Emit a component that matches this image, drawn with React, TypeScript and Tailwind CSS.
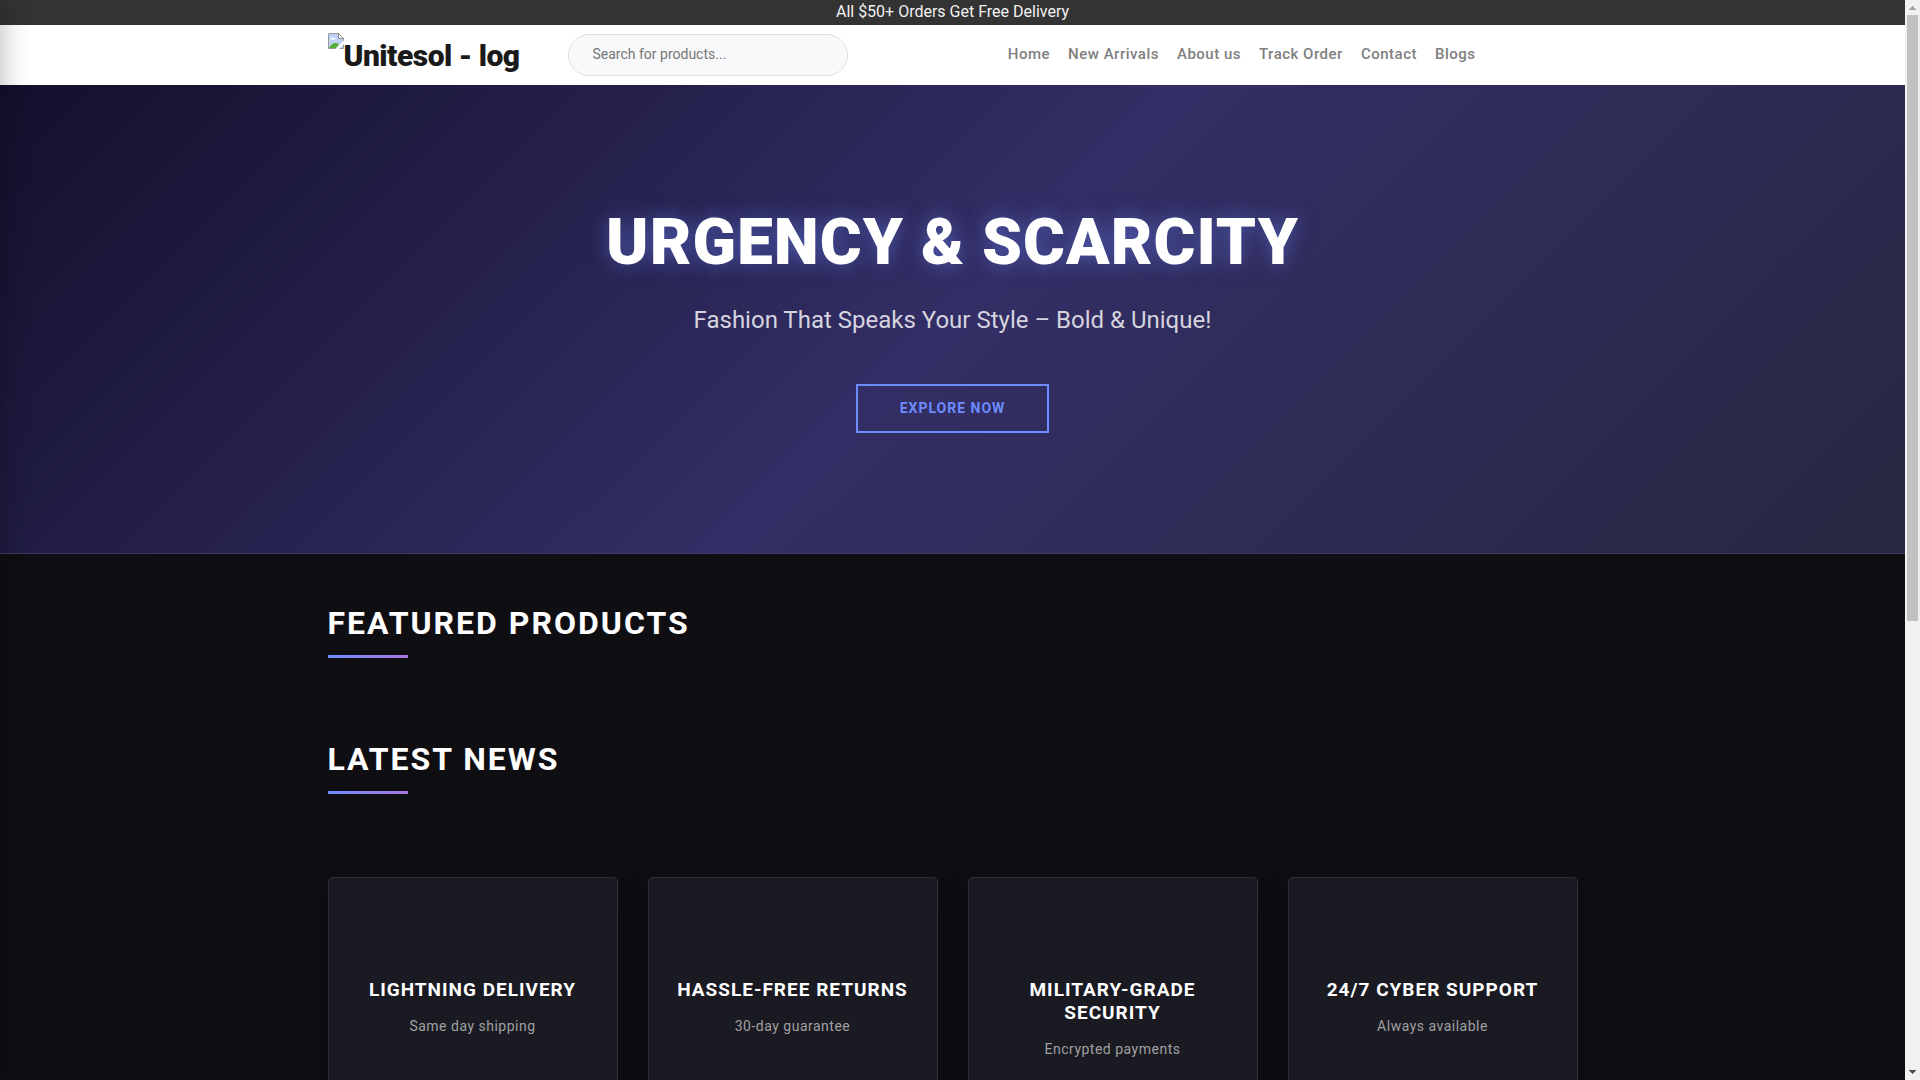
const navLinks = ['Home', 'New Arrivals', 'About us', 'Track Order', 'Contact', 'Blogs'];

const features = [
  { title: 'Lightning Delivery', text: 'Same day shipping' },
  { title: 'Hassle-Free Returns', text: '30-day guarantee' },
  { title: 'Military-Grade Security', text: 'Encrypted payments' },
  { title: '24/7 Cyber Support', text: 'Always available' },
];

function BrokenImage() {
  return (
    <svg width="16" height="16" viewBox="0 0 16 16" className="shrink-0" aria-hidden="true">
      <path d="M.5.5h10l5 5v10H.5z" fill="#fff" stroke="#9a9a9a" />
      <path d="M1 1h9v5h5v9H1z" fill="#bfd3f8" />
      <path d="M2.500 6.500h5c0-1.500-1-1.900-1.700-1.500-.4-1.200-1.900-1-2.100.100-.8 0-1.200.6-1.200 1.400z" fill="#fff" />
      <path d="M1 15c2-3.500 4-5 6-5 1.500 0 3 .6 4 1.500L8 15z" fill="#56ad33" />
      <path d="M7.500 16L16 7.500V11l-5 5z" fill="#fff" />
      <path d="M10.500.5v5h5z" fill="#fff" stroke="#8a8a8a" />
    </svg>
  );
}

function SectionTitle({ children }: { children: string }) {
  return (
    <section className="pb-[82px]">
      <h2 className="text-[32px] leading-[38px] font-bold tracking-[2px] text-white uppercase">{children}</h2>
      <div className="mt-[13px] h-[3px] w-20 bg-linear-to-r from-[#6c8cff] to-[#a777e3]" />
    </section>
  );
}

function Scrollbar() {
  return (
    <div className="flex w-[15px] shrink-0 flex-col items-center bg-[#f1f1f1]" aria-hidden="true">
      <svg width="15" height="15" viewBox="0 0 15 15" shapeRendering="crispEdges">
        <path d="M7 6h1v1h1v1h1v1h1v1H4V9h1V8h1V7h1z" fill="#a3a3a3" />
      </svg>
      <div className="flex w-full flex-1 flex-col pr-[2px] pl-[2px]">
        <div className="h-[57.7%] bg-[#c1c1c1]" />
      </div>
      <svg width="15" height="15" viewBox="0 0 15 15" shapeRendering="crispEdges">
        <path d="M4 5h7v1h-1v1H9v1H8v1H7V8H6V7H5V6H4z" fill="#505050" />
      </svg>
    </div>
  );
}

export default function App() {
  return (
    <div className="flex h-screen bg-[#0f0e13] font-[Roboto,sans-serif]">
      <div className="relative min-w-0 flex-1 overflow-hidden">
        <p className="h-[25px] bg-[#333333] text-center text-base leading-[23px] text-[#f1f1f1]">
          All $50+ Orders Get Free Delivery
        </p>

        <header className="bg-white">
          <div className="mx-auto flex h-[60px] max-w-[1250px] items-center">
            <a
              href="#"
              className="flex h-11 w-[194px] shrink-0 text-[30px] leading-[46px] font-black tracking-[-0.5px] whitespace-nowrap text-[#1a1a1a]"
            >
              <BrokenImage />
              Unitesol - log
            </a>
            <input
              type="search"
              aria-label="Search for products"
              placeholder="Search for products..."
              className="ml-[46px] h-[42px] w-[280px] rounded-full border border-[#e0e0e0] bg-[#f8f9fb] px-6 pb-[2px] text-sm text-[#333333] placeholder:text-[#757575]"
            />
            <nav className="ml-auto flex gap-[18px] pr-[102px] pb-[2px]">
              {navLinks.map((label) => (
                <a
                  key={label}
                  href="#"
                  className="text-[15px] leading-6 font-medium tracking-[0.5px] whitespace-nowrap text-[#808080]"
                >
                  {label}
                </a>
              ))}
            </nav>
          </div>
        </header>

        <section className="flex flex-col items-center border-b border-[#3d3b63] bg-[linear-gradient(135deg,#13102c_0%,#332e65_50%,#272740_100%)] pt-[119px] pb-[120px] text-center">
          <h1 className="text-[64px] leading-[77px] font-black tracking-[1px] text-white uppercase [text-shadow:0_0_20px_rgba(108,140,255,0.5)]">
            Urgency &amp; Scarcity
          </h1>
          <p className="mt-5 text-2xl leading-[38px] text-[#d5d4df]">
            Fashion That Speaks Your Style – Bold &amp; Unique!
          </p>
          <button
            type="button"
            className="mt-[45px] h-[49px] border-2 border-[#6c8cff] px-[42px] pb-[2px] text-sm font-bold tracking-[1px] text-[#6c8cff] uppercase"
          >
            Explore Now
          </button>
        </section>

        <main className="mx-auto max-w-[1250px] pt-[50px]">
          <SectionTitle>Featured Products</SectionTitle>
          <SectionTitle>Latest News</SectionTitle>

          <section className="grid grid-cols-4 gap-[30px] pt-px pb-20">
            {features.map((feature) => (
              <article
                key={feature.title}
                className="min-h-[240px] rounded-[5px] border border-[#2f2f35] bg-[#1a1a23] px-5 pt-[100px] pb-10 text-center shadow-[0_10px_30px_rgba(0,0,0,0.3)]"
              >
                <h3 className="text-[19px] leading-[23px] font-bold tracking-[1px] text-white uppercase">
                  {feature.title}
                </h3>
                <p className="mt-[14px] text-sm leading-[22px] tracking-[0.5px] text-[#a0a0a0]">{feature.text}</p>
              </article>
            ))}
          </section>
        </main>

        <div className="absolute inset-y-0 -left-10 w-10 shadow-[0_0_30px_rgba(0,0,0,0.3)]" />
      </div>
      <Scrollbar />
    </div>
  );
}
